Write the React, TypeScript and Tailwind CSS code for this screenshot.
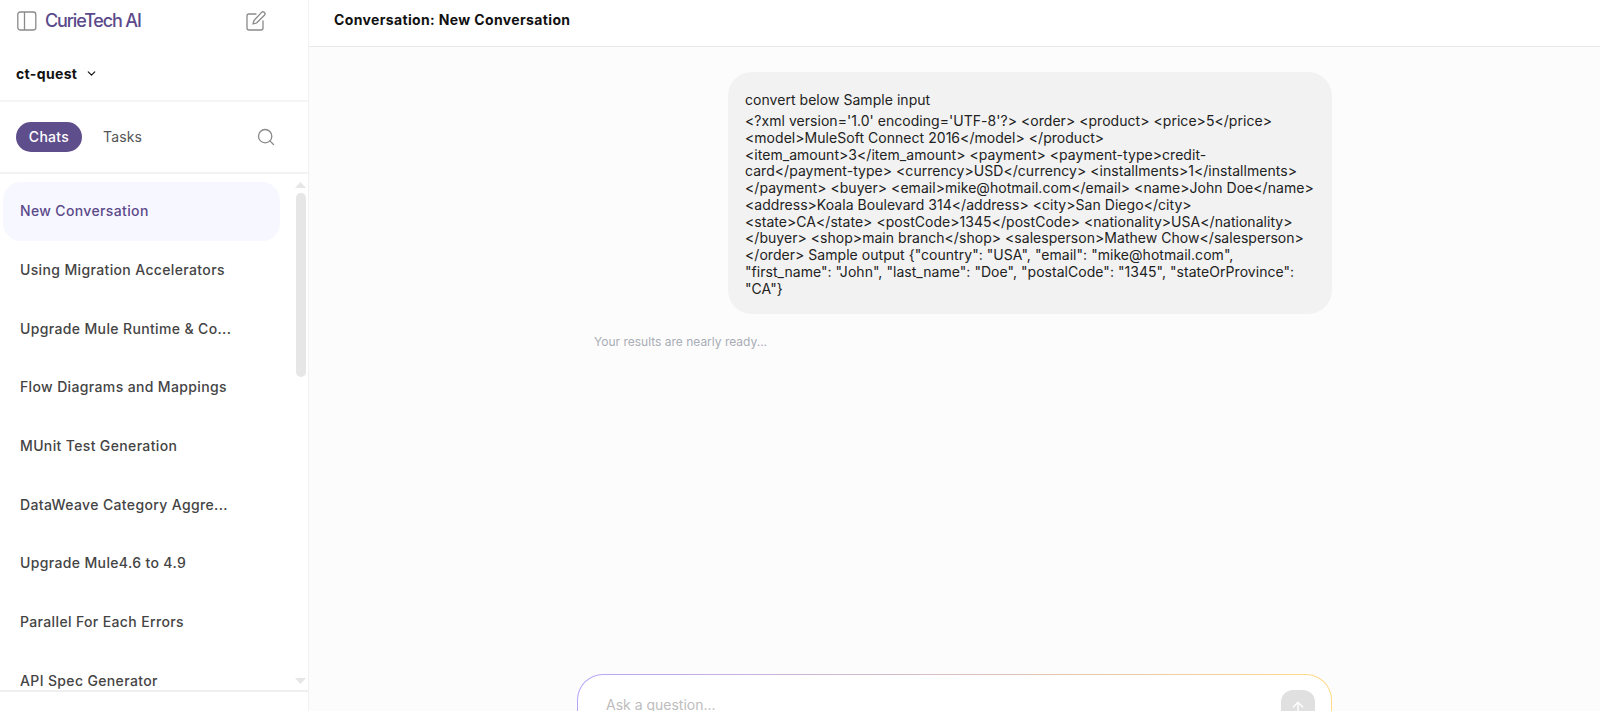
import { ChevronDown, Search, ArrowUp } from "lucide-react";

const chats = [
  "New Conversation",
  "Using Migration Accelerators",
  "Upgrade Mule Runtime & Co...",
  "Flow Diagrams and Mappings",
  "MUnit Test Generation",
  "DataWeave Category Aggre...",
  "Upgrade Mule4.6 to 4.9",
  "Parallel For Each Errors",
  "API Spec Generator",
];

const lines = [
  "<?xml version='1.0' encoding='UTF-8'?> <order> <product> <price>5</price>",
  "<model>MuleSoft Connect 2016</model> </product>",
  "<item_amount>3</item_amount> <payment> <payment-type>credit-",
  "card</payment-type> <currency>USD</currency> <installments>1</installments>",
  "</payment> <buyer> <email>mike@hotmail.com</email> <name>John Doe</name>",
  "<address>Koala Boulevard 314</address> <city>San Diego</city>",
  "<state>CA</state> <postCode>1345</postCode> <nationality>USA</nationality>",
  "</buyer> <shop>main branch</shop> <salesperson>Mathew Chow</salesperson>",
  "</order> Sample output {\"country\": \"USA\", \"email\": \"mike@hotmail.com\",",
  "\"first_name\": \"John\", \"last_name\": \"Doe\", \"postalCode\": \"1345\", \"stateOrProvince\":",
  "\"CA\"}",
];

export default function App() {
  return (
    <div className="flex h-[711px] w-[1600px] overflow-hidden bg-[#fcfcfc] font-['Inter',sans-serif]">
      <aside className="flex h-full w-[309px] shrink-0 flex-col border-r border-[#f1f1f1] bg-white">
        <div className="flex h-[41px] shrink-0 items-center pl-[17px] pr-[42px]">
          <svg width="20" height="20" viewBox="0 0 20 20" fill="none" stroke="#8a8a8a" strokeWidth="1.3">
            <rect x="0.8" y="1" width="18" height="18" rx="2.5" />
            <line x1="7.5" y1="1" x2="7.5" y2="19" />
          </svg>
          <span className="ml-2 text-[18px] font-medium tracking-[-1.15px] text-[#5b4a8a]">CurieTech AI</span>
          <svg className="ml-auto" width="20" height="20" viewBox="0 0 20 20" fill="none" stroke="#8a8a8a" strokeWidth="1.3" strokeLinecap="round" strokeLinejoin="round">
            <path d="M10 3H3a2 2 0 0 0-2 2v12a2 2 0 0 0 2 2h12a2 2 0 0 0 2-2v-7" />
            <path d="M15.6 1.4a1.9 1.9 0 0 1 2.8 2.8L10.5 12l-3.5 1 1-3.5z" />
          </svg>
        </div>
        <div className="flex h-[61px] shrink-0 items-center gap-[8px] border-b-2 border-[#f5f5f5] pl-4 pt-[5px]">
          <span className="text-[14px] font-bold tracking-[0.35px] text-[#111]">ct-quest</span>
          <ChevronDown size={13} strokeWidth={2.2} className="text-[#111]" />
        </div>
        <div className="flex h-[72px] shrink-0 items-center border-b-2 border-[#f3f3f3] pb-[1px] pl-4 pr-[32px]">
          <span className="flex h-[30px] w-[66px] items-center justify-center rounded-full bg-[#5f4e8c] pb-[1px] text-[14px] font-medium tracking-[0.3px] text-white">Chats</span>
          <span className="ml-[21px] text-[14px] tracking-[0.15px] text-[#555]">Tasks</span>
          <Search size={20} strokeWidth={1.6} className="ml-auto text-[#8a8a8a]" />
        </div>
        <div className="flex min-h-0 flex-1 border-b-2 border-[#efefef]">
          <div className="min-h-0 flex-1 overflow-hidden pl-[3px] pr-[13px] pt-2">
            {chats.map((c, i) => (
              <div
                key={c}
                className={
                  "flex h-[58.7px] items-center rounded-[18px] pb-[1px] pl-[17px] text-[14px] font-medium tracking-[0.36px] whitespace-nowrap " +
                  (i === 0 ? "bg-[#f7f7ff] text-[#5b4a8a]" : "text-[#444]")
                }
              >
                {c}
              </div>
            ))}
          </div>
          <div className="flex w-[15px] shrink-0 flex-col items-center pt-[8px]">
            <svg width="11" height="6" viewBox="0 0 11 6"><path d="M5.5 0 11 6H0z" fill="#e6e6e6" /></svg>
            <div className="mt-[5px] h-[184px] w-[10px] rounded-full bg-[#e6e6e6]" />
            <svg className="mt-auto mb-[6px]" width="11" height="6" viewBox="0 0 11 6"><path d="M5.5 6 11 0H0z" fill="#e6e6e6" /></svg>
          </div>
        </div>
        <div className="h-[19px] shrink-0" />
      </aside>
      <main className="flex min-w-0 flex-1 flex-col">
        <header className="flex h-[47px] shrink-0 items-center border-b border-[#e9e9e9] bg-white pb-[8px] pl-[25px] text-[14px] font-bold tracking-[0.36px] text-[#111]">
          Conversation: New Conversation
        </header>
        <div className="mx-auto flex min-h-0 w-[755px] flex-1 flex-col">
          <div className="mt-[25px] ml-auto w-[604px] rounded-[24px] bg-[#f2f2f2] pb-[17px] pl-[17px] pr-[15px] pt-[19px] text-[14px] leading-[16.75px] tracking-[0.04px] text-[#222]">
            <div className="mb-[5px] leading-[17px]">convert below Sample input</div>
            {lines.map((l) => (
              <div key={l} className="whitespace-nowrap">{l}</div>
            ))}
          </div>
          <div className="mt-[19px] pl-[17px] text-[12px] text-[#a9adb6]">Your results are nearly ready...</div>
          <div className="mt-auto -mb-[30px] h-[67px] rounded-t-[26px] bg-[linear-gradient(90deg,#b6a4f8,#ffdb88)] p-[1px]">
            <div className="flex h-full items-start rounded-t-[25px] bg-white pl-[28px] pr-[16px] pt-[15px]">
              <span className="pt-[10px] text-[14px] leading-[10px] text-[#bdbdbd]">Ask a question...</span>
              <span className="ml-auto flex h-[34px] w-[34px] items-center justify-center rounded-[12px] bg-[#e0e0e0]">
                <ArrowUp size={16} className="text-white" />
              </span>
            </div>
          </div>
        </div>
      </main>
    </div>
  );
}
